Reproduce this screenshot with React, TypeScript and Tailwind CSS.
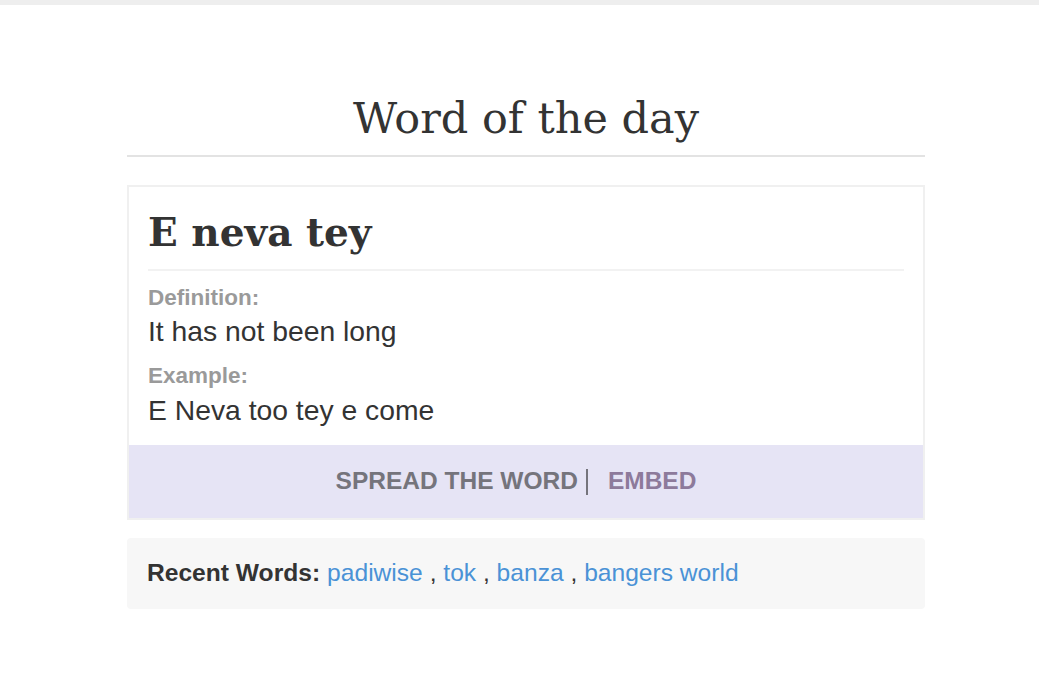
import React from "react";

export default function App() {
  const serif = { fontFamily: '"DejaVu Serif", "Liberation Serif", serif' };
  const sans = { fontFamily: '"Liberation Sans", Arial, sans-serif' };
  return (
    <div className="min-h-[696px] bg-white" style={sans}>
      <div className="h-[5px] bg-[#eeeeee]" />
      <div className="ml-[127px] w-[798px] pt-[86px]">
        <h1
          className="text-center text-[43px] leading-[54px] text-[#333333] pb-[10px] border-b-2 border-[#e3e3e3]"
          style={serif}
        >
          Word of the day
        </h1>
        <div className="mt-[28px] border-2 border-[#f0f0f0]">
          <div className="px-[19px] pt-[18px] pb-[18px]">
            <h2
              className="text-[39px] leading-[54px] font-bold text-[#333333] pb-[10px] border-b-2 border-[#f2f2f2]"
              style={serif}
            >
              E neva tey
            </h2>
            <div className="mt-[14px] text-[22.5px] leading-[26px] font-bold text-[#9a9a9a]">
              Definition:
            </div>
            <div className="mt-[3px] text-[28.3px] leading-[34px] text-[#333333]">
              It has not been long
            </div>
            <div className="mt-[15px] text-[22.5px] leading-[26px] font-bold text-[#9a9a9a]">
              Example:
            </div>
            <div className="mt-[4px] text-[28.3px] leading-[34px] text-[#333333]">
              E Neva too tey e come
            </div>
          </div>
          <div className="h-[73px] bg-[#e6e4f5] flex items-center justify-center pr-[20px] text-[24.5px] font-bold">
            <span className="text-[#75747c]">SPREAD THE WORD</span>
            <span className="ml-[8px] mr-[20px] h-[26px] w-[2px] bg-[#75747c]" />
            <span className="text-[#8d7a9b]">EMBED</span>
          </div>
        </div>
        <div className="mt-[18px] h-[71px] rounded bg-[#f7f7f7] flex items-center px-[20px] text-[24.6px]">
          <span className="font-bold text-[#333333]">Recent Words:</span>
          <span className="ml-[7px] text-[#4a92d6]">padiwise</span>
          <span className="text-[#333333]">&nbsp;,&nbsp;</span>
          <span className="text-[#4a92d6]">tok</span>
          <span className="text-[#333333]">&nbsp;,&nbsp;</span>
          <span className="text-[#4a92d6]">banza</span>
          <span className="text-[#333333]">&nbsp;,&nbsp;</span>
          <span className="text-[#4a92d6]">bangers world</span>
        </div>
      </div>
    </div>
  );
}
